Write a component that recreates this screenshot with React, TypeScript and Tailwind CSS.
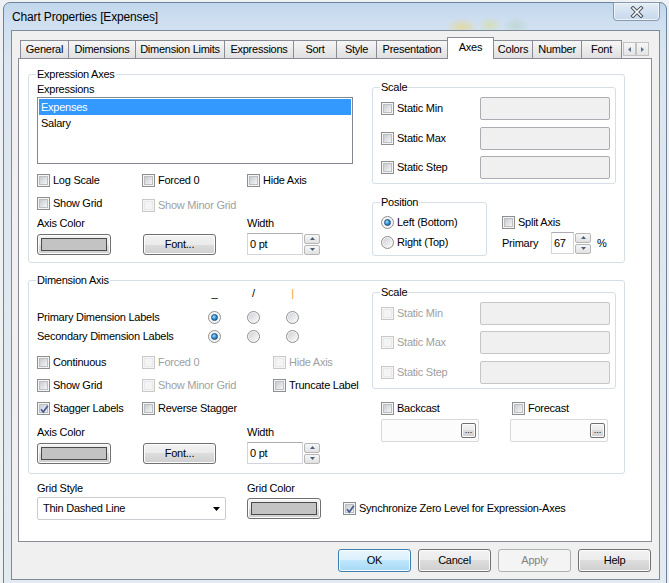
import React from "react";
import { clsx, type ClassValue } from "clsx";
import { twMerge } from "tailwind-merge";

const cn = (...inputs: ClassValue[]) => twMerge(clsx(inputs));

// win7 button face
const face =
  "bg-[linear-gradient(#f2f2f2,#ebebeb_50%,#dddddd_50%,#cfcfcf)] shadow-[inset_0_0_0_1px_#fcfcfc]";

interface BaseProps {
  className?: string;
  children?: React.ReactNode;
}

const Group: React.FC<BaseProps & { title: string }> = ({ title, className, children }) => (
  <div className={cn("relative shrink-0 rounded-[3px] border border-[#d5dfe5]", className)}>
    <span className="absolute -top-[7px] left-[7px] bg-white px-px leading-[13px]">{title}</span>
    {children}
  </div>
);

const CheckBox: React.FC<{ checked?: boolean; disabled?: boolean }> = ({ checked, disabled }) => (
  <span
    className={cn(
      "relative flex h-[13px] w-[13px] shrink-0 items-center justify-center border bg-[#f4f4f4]",
      disabled ? "border-[#c9c9c9]" : "border-[#8e8f8f]"
    )}
  >
    <span
      className={cn(
        "h-[9px] w-[9px] border",
        disabled
          ? "border-[#e9e9e9] bg-[#f4f4f4]"
          : "border-[#bcc0c5] bg-gradient-to-br from-[#c8cbd0] to-[#f5f5f5]"
      )}
    />
    {checked && (
      <svg className="absolute left-px top-px" width="11" height="11" viewBox="0 0 11 11">
        <path d="M2 5.2 L4.3 8 L8.8 1.8" fill="none" stroke="#4a5f97" strokeWidth="1.8" />
      </svg>
    )}
  </span>
);

const Check: React.FC<{ label: string; checked?: boolean; disabled?: boolean; className?: string }> = ({
  label,
  checked,
  disabled,
  className,
}) => (
  <div className={cn("flex h-[16px] shrink-0 items-center", className)}>
    <CheckBox checked={checked} disabled={disabled} />
    <span className={cn("ml-[3px] whitespace-nowrap", disabled && "text-[#a0a0a0]")}>{label}</span>
  </div>
);

const Radio: React.FC<{ on?: boolean; className?: string }> = ({ on, className }) => (
  <span
    className={cn(
      "flex h-[13px] w-[13px] shrink-0 items-center justify-center rounded-full border border-[#8e8f8f] bg-[#f4f4f4]",
      className
    )}
  >
    {on ? (
      <span className="h-[7px] w-[7px] rounded-full border border-[#1a4f7c] bg-[radial-gradient(circle_at_35%_35%,#a6e0fc,#2b8bd3_55%,#0d4a80)]" />
    ) : (
      <span className="h-[9px] w-[9px] rounded-full bg-gradient-to-br from-[#ced1d5] to-[#fafafa]" />
    )}
  </span>
);

const Button: React.FC<{ label: string; primary?: boolean; disabled?: boolean; className?: string }> = ({
  label,
  primary,
  disabled,
  className,
}) => (
  <div
    className={cn(
      "flex h-[23px] w-[73px] shrink-0 items-center justify-center rounded-[3px] border",
      primary
        ? "border-[#3c7fb1] bg-[linear-gradient(#eaf6fd,#d9f0fc_50%,#bee6fd_50%,#a7d9f5)] shadow-[inset_0_0_0_1px_#f5fbfe]"
        : disabled
        ? "border-[#adb2b5] bg-[#f4f4f4] text-[#838383]"
        : cn("border-[#707070]", face),
      className
    )}
  >
    {label}
  </div>
);

const ColorButton: React.FC<{ className?: string }> = ({ className }) => (
  <div
    className={cn(
      "flex h-[21px] w-[74px] shrink-0 items-center justify-center rounded-[3px] border border-[#707070] p-[3px]",
      face,
      className
    )}
  >
    <div className="h-full w-full border border-[#4b4b4b] bg-[#c3c3c3]" />
  </div>
);

const Arrow: React.FC<{ up?: boolean }> = ({ up }) => (
  <svg width="5" height="3" viewBox="0 0 5 3">
    <path d={up ? "M0 3 L2.5 0 L5 3 Z" : "M0 0 L5 0 L2.5 3 Z"} fill="#4c607a" />
  </svg>
);

const Spin: React.FC<{ value: string; width: string; className?: string }> = ({ value, width, className }) => (
  <div className={cn("flex h-[22px] shrink-0", className)}>
    <div className={cn("flex items-center border border-[#d2d6dc] border-t-[#abadb3] bg-white pl-[2px]", width)}>
      {value}
    </div>
    <div className="ml-px flex w-[16px] flex-col justify-center gap-px">
      <div className="flex h-[10px] items-center justify-center rounded-[2px] border border-[#b6b6b6] bg-gradient-to-b from-[#f7f7f7] to-[#e1e1e1]">
        <Arrow up />
      </div>
      <div className="flex h-[10px] items-center justify-center rounded-[2px] border border-[#b6b6b6] bg-gradient-to-b from-[#f7f7f7] to-[#e1e1e1]">
        <Arrow />
      </div>
    </div>
  </div>
);

const Field: React.FC<BaseProps> = ({ className }) => (
  <div className={cn("h-[23px] w-[130px] shrink-0 rounded-[2px] border border-[#abadb3] bg-[#f0f0f0]", className)} />
);

const ScaleRow: React.FC<{ label: string; disabled?: boolean; className?: string }> = ({ label, disabled, className }) => (
  <div className={cn("flex h-[23px] items-center", className)}>
    <Check label={label} disabled={disabled} className="w-[99px]" />
    <Field className={disabled ? "border-[#c4c6ca]" : undefined} />
  </div>
);

const Browse: React.FC<BaseProps> = ({ className }) => (
  <div
    className={cn(
      "flex h-[23px] w-[98px] shrink-0 items-center justify-end rounded-[2px] border border-[#d9d9d9] bg-[#fcfcfc] pr-[2px]",
      className
    )}
  >
    <div
      className={cn(
        "flex h-[15px] w-[15px] items-end justify-center rounded-[2px] border border-[#707070] pb-[2px] text-[9px] leading-[9px] tracking-normal",
        face
      )}
    >
      ...
    </div>
  </div>
);

const Tab: React.FC<{ label: string; active?: boolean; className?: string }> = ({ label, active, className }) => (
  <div
    className={cn(
      "-ml-px flex shrink-0 items-center justify-center whitespace-nowrap border border-b-0 border-[#898c95] first:ml-0",
      active
        ? "relative z-10 -mb-px h-[22px] bg-white pb-[3px]"
        : "h-[18px] bg-gradient-to-b from-[#f6f6f6] to-[#e0e0e0]",
      className
    )}
  >
    {label}
  </div>
);

const ScrollBtn: React.FC<{ left?: boolean }> = ({ left }) => (
  <div className="flex h-[14px] w-[13px] items-center justify-center border border-[#c3c3c3] bg-gradient-to-b from-[#f7f7f7] to-[#e4e4e4]">
    <svg width="3" height="5" viewBox="0 0 3 5">
      <path d={left ? "M3 0 L0 2.5 L3 5 Z" : "M0 0 L3 2.5 L0 5 Z"} fill="#5a6f8f" />
    </svg>
  </div>
);

const DimRow: React.FC<{ label: string; className?: string }> = ({ label, className }) => (
  <div className={cn("flex h-[16px] items-center", className)}>
    <span className="w-[171px] whitespace-nowrap">{label}</span>
    <Radio on />
    <Radio className="ml-[26px]" />
    <Radio className="ml-[26px]" />
  </div>
);

export default function App() {
  return (
    <div className="h-[583px] w-[669px] overflow-hidden bg-[#eef1f4] pl-[3px] pt-[2px] font-['Liberation_Sans',Arial,sans-serif] text-[11px] leading-[13px] tracking-[-0.25px] text-black">
      {/* window frame */}
      <div className="h-[620px] w-[664px] rounded-t-[7px] border border-[#6e8299] bg-[radial-gradient(ellipse_16px_9px_at_458px_24px,rgba(232,214,140,0.75),transparent),radial-gradient(ellipse_12px_8px_at_486px_22px,rgba(214,222,160,0.7),transparent),radial-gradient(ellipse_14px_9px_at_512px_23px,rgba(180,210,195,0.6),transparent),linear-gradient(180deg,#c2d7ed_0px,#d0e0f1_22px,#dce6f0_60px,#e4eaf0_100%)]">
        {/* title bar */}
        <div className="flex h-[27px] items-start">
          <span className="mt-[7px] pl-[8px] text-[12px] leading-[14px] tracking-[-0.15px]">
            Chart Properties [Expenses]
          </span>
          <div className="-mt-px ml-auto mr-[6px] flex h-[19px] w-[47px] items-center justify-center rounded-b-[4px] border border-[#8798af] bg-gradient-to-b from-[#e3ecf6] to-[#c6d8ec] shadow-[inset_0_0_0_1px_#eef4fa]">
            <svg width="14" height="12" viewBox="0 0 14 12">
              <path d="M3 2 L11 10 M11 2 L3 10" stroke="#46505c" strokeWidth="3.6" strokeLinecap="square" />
              <path d="M3 2 L11 10 M11 2 L3 10" stroke="#ffffff" strokeWidth="1.6" strokeLinecap="square" />
            </svg>
          </div>
        </div>

        {/* client area */}
        <div className="ml-[7px] h-[550px] w-[649px] border border-[#7f8b99] bg-[#f0f0f0] pl-[6px] pt-[6px]">
          {/* tabs */}
          <div className="flex h-[21px] items-end pl-[2px]">
            <Tab label="General" className="w-[49px]" />
            <Tab label="Dimensions" className="w-[68px]" />
            <Tab label="Dimension Limits" className="w-[90px]" />
            <Tab label="Expressions" className="w-[70px]" />
            <Tab label="Sort" className="w-[44px]" />
            <Tab label="Style" className="w-[41px]" />
            <Tab label="Presentation" className="w-[72px]" />
            <Tab label="Axes" active className="w-[47px]" />
            <Tab label="Colors" className="w-[40px]" />
            <Tab label="Number" className="w-[50px]" />
            <Tab label="Font" className="w-[41px]" />
            <div className="mb-[2px] ml-px flex self-end">
              <ScrollBtn left />
              <ScrollBtn />
            </div>
          </div>

          {/* tab page */}
          <div className="h-[484px] w-[634px] border border-[#898c95] bg-white pl-[9px] pt-[15px]">
            <Group title="Expression Axes" className="h-[189px] w-[597px]">
              <div className="flex pl-[8px]">
                <div className="w-[316px] shrink-0">
                  <div className="mt-[8px]">Expressions</div>
                  <div className="mt-px h-[67px] border border-[#828790] p-px">
                    <div className="h-[16px] bg-[#3399ff] pl-[2px] leading-[16px] text-white">Expenses</div>
                    <div className="h-[16px] pl-[2px] leading-[16px]">Salary</div>
                  </div>
                  <div className="mt-[8px] flex">
                    <Check label="Log Scale" className="w-[105px]" />
                    <Check label="Forced 0" className="w-[105px]" />
                    <Check label="Hide Axis" />
                  </div>
                  <div className="mt-[7px] flex">
                    <Check label="Show Grid" className="w-[105px]" />
                    <Check label="Show Minor Grid" disabled className="mt-[2px]" />
                  </div>
                  <div className="mt-[4px] flex">
                    <span className="w-[210px]">Axis Color</span>
                    <span>Width</span>
                  </div>
                  <div className="mt-[3px] flex h-[22px] items-center">
                    <ColorButton />
                    <Button label="Font..." className="ml-[32px] h-[21px]" />
                    <Spin value="0 pt" width="w-[56px]" className="ml-[31px]" />
                  </div>
                </div>

                <div className="ml-[19px] w-[244px] shrink-0">
                  <Group title="Scale" className="mt-[12px] h-[97px] w-[244px] pl-[8px] pt-[9px]">
                    <ScaleRow label="Static Min" />
                    <ScaleRow label="Static Max" className="mt-[7px]" />
                    <ScaleRow label="Static Step" className="mt-[6px]" />
                  </Group>
                  <div className="mt-[18px] flex">
                    <Group title="Position" className="h-[54px] w-[115px] pl-[8px] pt-[11px]">
                      <div className="flex h-[16px] items-center">
                        <Radio on />
                        <span className="ml-[3px] whitespace-nowrap">Left (Bottom)</span>
                      </div>
                      <div className="mt-[4px] flex h-[16px] items-center">
                        <Radio />
                        <span className="ml-[3px] whitespace-nowrap">Right (Top)</span>
                      </div>
                    </Group>
                    <div className="ml-[15px] pt-[12px]">
                      <Check label="Split Axis" />
                      <div className="mt-[2px] flex h-[22px] items-center">
                        <span className="w-[49px]">Primary</span>
                        <Spin value="67" width="w-[23px]" />
                        <span className="ml-[6px]">%</span>
                      </div>
                    </div>
                  </div>
                </div>
              </div>
            </Group>

            <Group title="Dimension Axis" className="mt-[17px] h-[194px] w-[597px]">
              <div className="flex pl-[8px]">
                <div className="w-[316px] shrink-0">
                  <div className="mt-[6px] flex">
                    <span className="w-[171px]" />
                    <span className="w-[13px] text-center">_</span>
                    <span className="ml-[26px] w-[13px] text-center">/</span>
                    <span className="ml-[26px] w-[13px] text-center text-[#f0a030]">|</span>
                  </div>
                  <DimRow label="Primary Dimension Labels" className="mt-[9px]" />
                  <DimRow label="Secondary Dimension Labels" className="mt-[3px]" />
                  <div className="mt-[10px] flex">
                    <Check label="Continuous" className="w-[105px]" />
                    <Check label="Forced 0" disabled className="w-[131px]" />
                    <Check label="Hide Axis" disabled />
                  </div>
                  <div className="mt-[7px] flex">
                    <Check label="Show Grid" className="w-[105px]" />
                    <Check label="Show Minor Grid" disabled className="w-[131px]" />
                    <Check label="Truncate Label" />
                  </div>
                  <div className="mt-[7px] flex">
                    <Check label="Stagger Labels" checked className="w-[105px]" />
                    <Check label="Reverse Stagger" />
                  </div>
                  <div className="mt-[10px] flex">
                    <span className="w-[210px]">Axis Color</span>
                    <span>Width</span>
                  </div>
                  <div className="mt-[3px] flex h-[22px] items-center">
                    <ColorButton />
                    <Button label="Font..." className="ml-[32px] h-[21px]" />
                    <Spin value="0 pt" width="w-[56px]" className="ml-[31px]" />
                  </div>
                </div>

                <div className="ml-[19px] w-[244px] shrink-0">
                  <Group title="Scale" className="mt-[11px] h-[97px] w-[244px] pl-[8px] pt-[9px]">
                    <ScaleRow label="Static Min" disabled />
                    <ScaleRow label="Static Max" disabled className="mt-[6px]" />
                    <ScaleRow label="Static Step" disabled className="mt-[7px]" />
                  </Group>
                  <div className="mt-[11px] flex pl-[9px]">
                    <Check label="Backcast" className="w-[131px]" />
                    <Check label="Forecast" />
                  </div>
                  <div className="mt-[3px] flex pl-[9px]">
                    <Browse />
                    <Browse className="ml-[31px]" />
                  </div>
                </div>
              </div>
            </Group>

            <div className="mt-[8px] flex pl-[9px]">
              <span className="w-[210px]">Grid Style</span>
              <span>Grid Color</span>
            </div>
            <div className="mt-[2px] flex items-center pl-[9px]">
              <div className="flex h-[23px] w-[189px] shrink-0 items-center rounded-[2px] border border-[#c9cdd2] bg-white px-[5px]">
                <span className="flex-1">Thin Dashed Line</span>
                <svg width="7" height="4" viewBox="0 0 7 4">
                  <path d="M0 0 H7 L3.5 4 Z" fill="#000" />
                </svg>
              </div>
              <ColorButton className="ml-[21px]" />
              <Check label="Synchronize Zero Level for Expression-Axes" checked className="ml-[22px]" />
            </div>
          </div>

          {/* dialog buttons */}
          <div className="mt-[7px] flex justify-end gap-[7px] pr-[8px]">
            <Button label="OK" primary />
            <Button label="Cancel" />
            <Button label="Apply" disabled />
            <Button label="Help" />
          </div>
        </div>
      </div>
    </div>
  );
}
